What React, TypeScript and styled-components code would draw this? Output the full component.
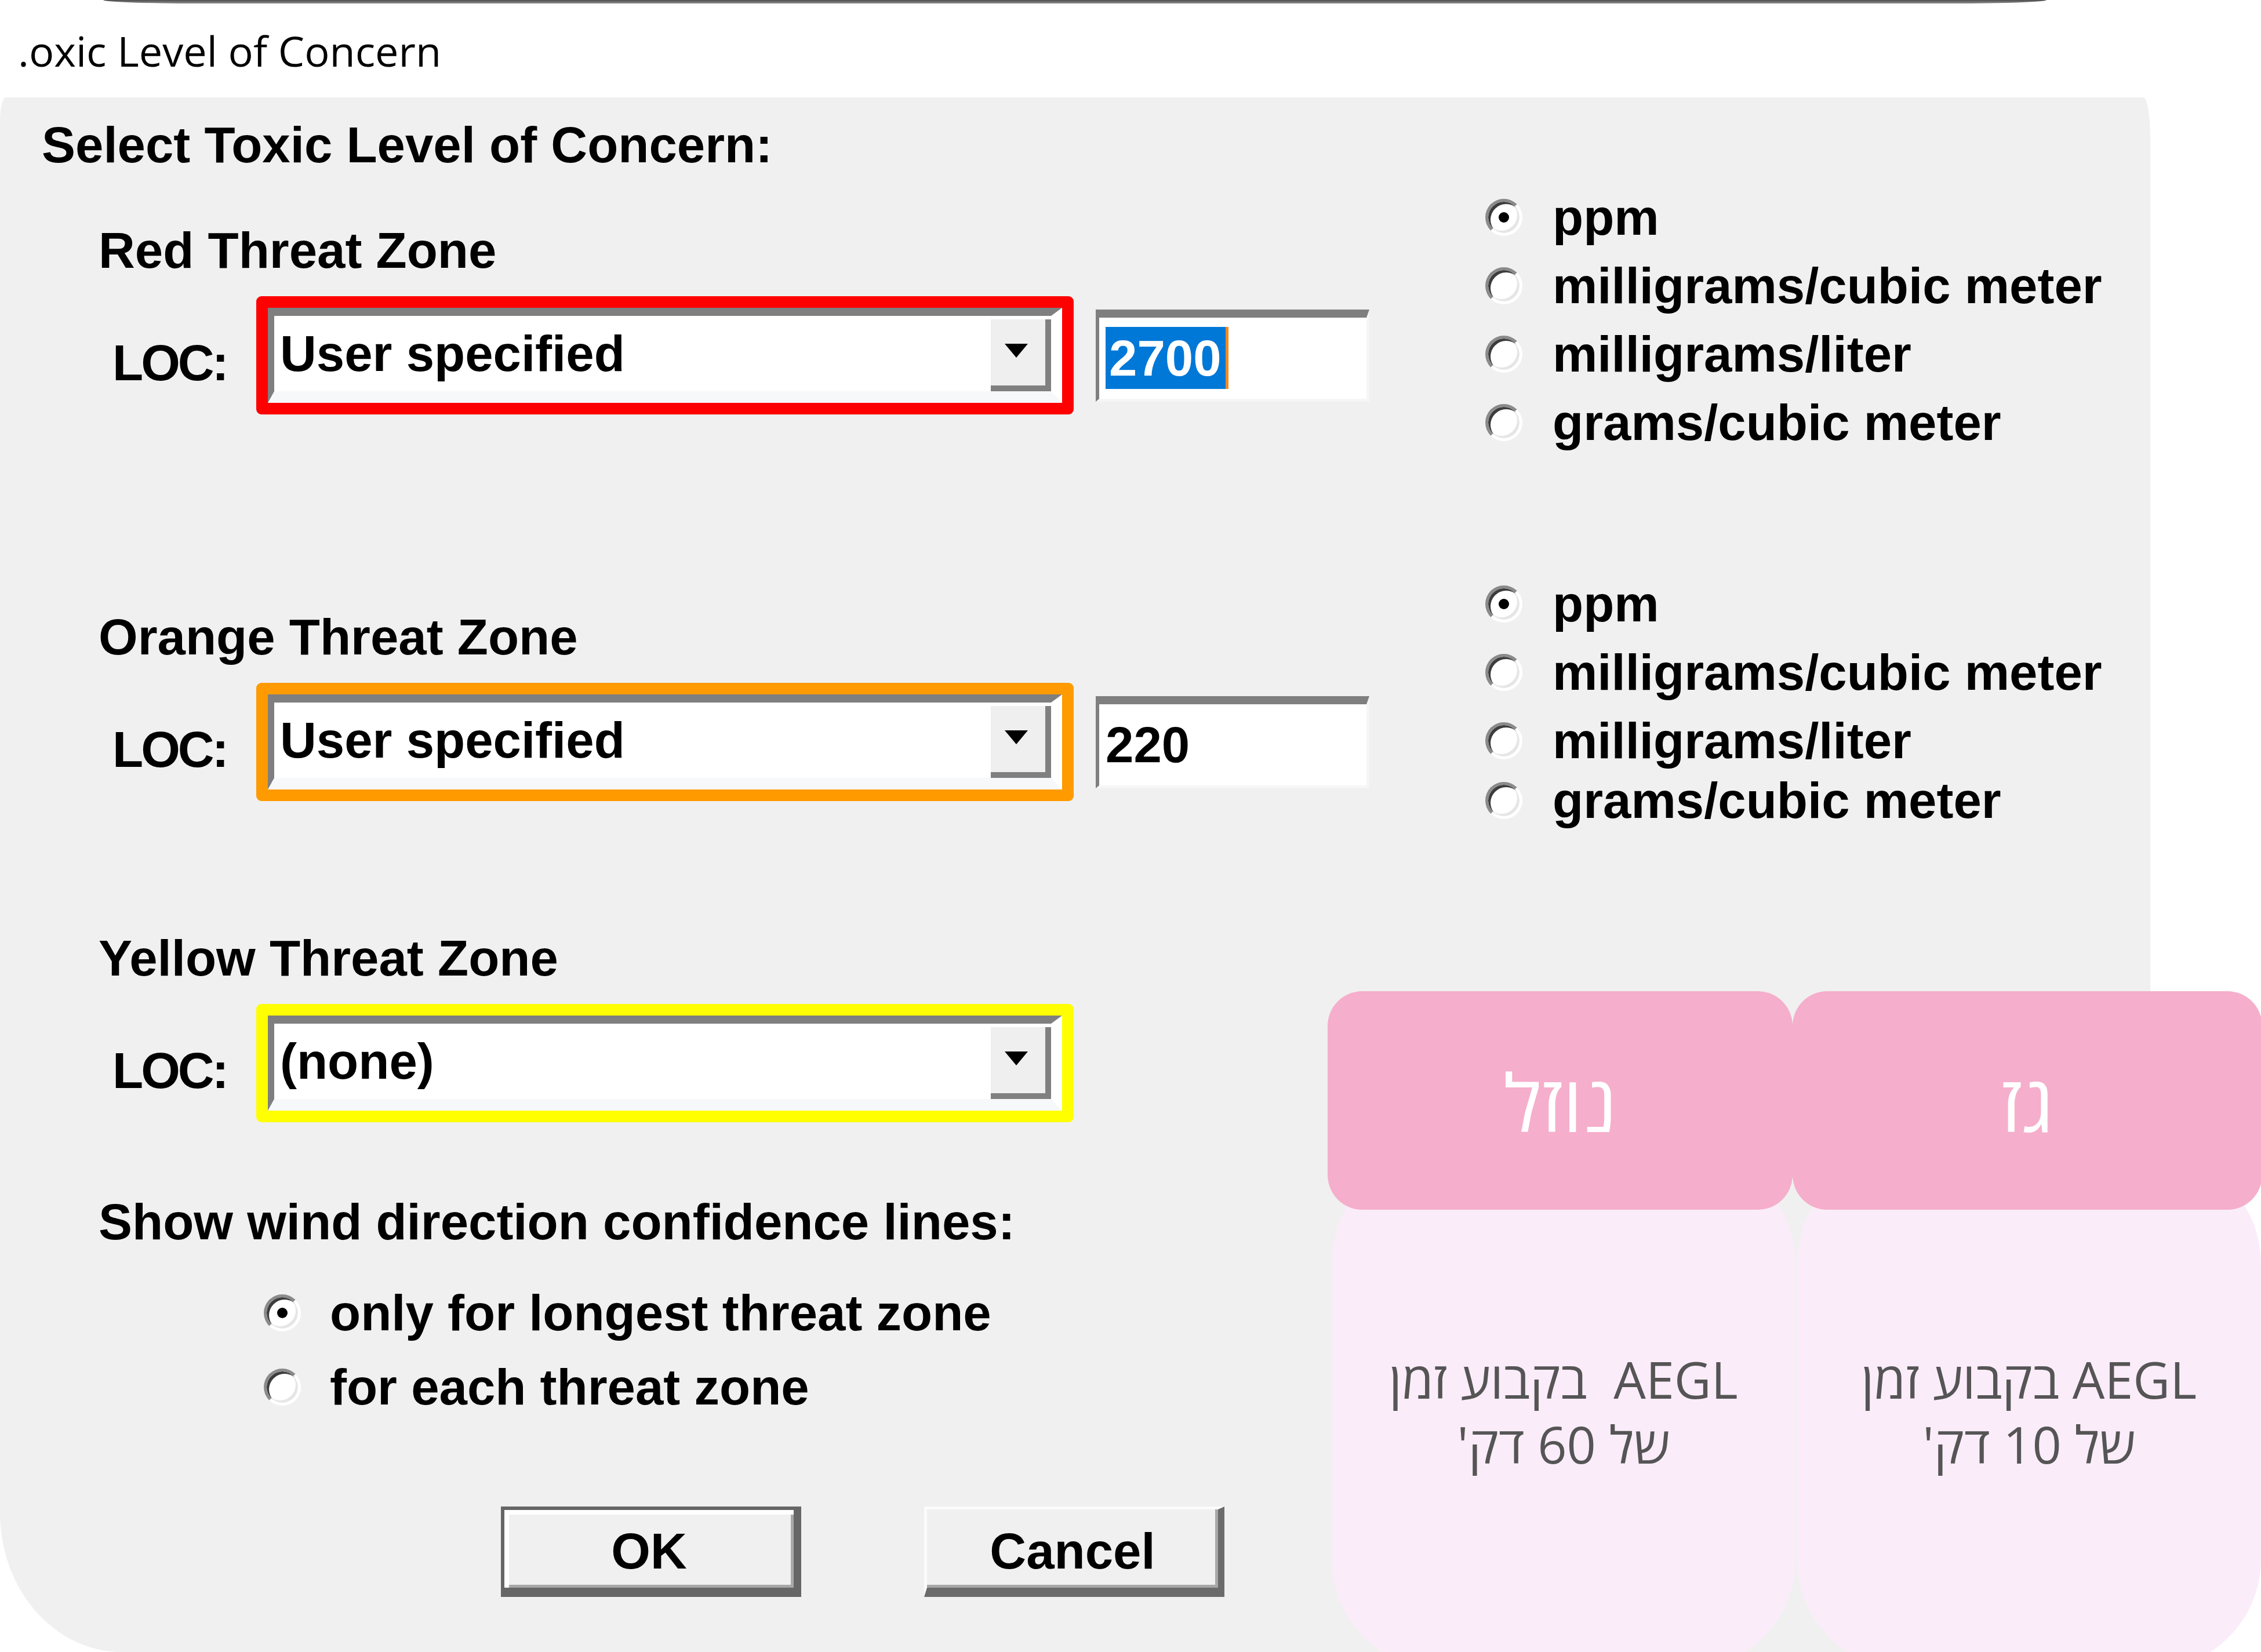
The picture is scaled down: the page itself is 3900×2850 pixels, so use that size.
import React from "react";
import styled, { createGlobalStyle } from "styled-components";

const GlobalStyle = createGlobalStyle`
  html, body {
    margin: 0;
    padding: 0;
    background: #ffffff;
  }
  body {
    width: 3900px;
    height: 2850px;
    overflow: hidden;
  }
  #root {
    width: 3900px;
    height: 2850px;
  }
`;

const Page = styled.div`
  position: relative;
  width: 3900px;
  height: 2850px;
  overflow: hidden;
  background: #ffffff;
  display: flex;
  flex-direction: column;
`;

const WindowEdge = styled.div`
  flex: none;
  margin-left: 178px;
  width: 3352px;
  height: 6px;
  background: linear-gradient(to bottom, #4e4e4e, #8e8e8e);
  border-radius: 0 0 160px 160px / 0 0 6px 6px;
`;

const TitleBar = styled.div`
  flex: none;
  height: 162px;
  display: flex;
  align-items: center;
  padding-left: 31px;
  font-family: "Open Sans", "Noto Sans", sans-serif;
  font-size: 72px;
  font-weight: 400;
  color: #000000;
`;

const Dialog = styled.div`
  flex: 1;
  width: 3709px;
  box-sizing: border-box;
  background: #f0f0f0;
  border-radius: 10px 12px 0 210px / 40px 70px 0 240px;
  padding: 32px 0 0 72px;
  font-family: "Liberation Sans", Arial, sans-serif;
  font-weight: 700;
  font-size: 87px;
  line-height: 100px;
  color: #000000;
`;

const Heading = styled.div`
  height: 100px;
  white-space: nowrap;
`;

const ZoneBlock = styled.div<{ $top: number }>`
  display: flex;
  align-items: flex-start;
  margin-left: 98px;
  margin-top: ${(p) => p.$top}px;
`;

const ZoneMain = styled.div`
  width: 2392px;
  flex: none;
  padding-top: 66px;
  display: flex;
  flex-direction: column;
`;

const ZoneTitle = styled.div`
  height: 100px;
  white-space: nowrap;
`;

const LocRow = styled.div`
  display: flex;
  align-items: center;
  margin-top: 29px;
  margin-left: 24px;
`;

const LocLabel = styled.div`
  width: 248px;
  flex: none;
  padding-top: 26px;
  letter-spacing: -4px;
`;

const ColorFrame = styled.div<{ $color: string }>`
  width: 1410px;
  height: 204px;
  box-sizing: border-box;
  flex: none;
  border: 20px solid ${(p) => p.$color};
  border-radius: 9px;
  display: flex;
`;

const Combo = styled.div`
  flex: 1;
  display: flex;
  border-style: solid;
  border-width: 14px 19px 20px 11px;
  border-color: #7f7f7f #ffffff #f7f8fa #7f7f7f;
  background: #ffffff;
`;

const ComboText = styled.div`
  flex: 1;
  display: flex;
  align-items: center;
  padding-left: 10px;
  white-space: nowrap;
`;

const DropButton = styled.div`
  width: 110px;
  flex: none;
  background: #efefef;
  box-shadow: inset 6px 6px 0 #ffffff, inset -10px -10px 0 #808080;
  display: flex;
  align-items: center;
  justify-content: center;
  padding: 0 10px 10px 0;
  box-sizing: border-box;
`;

const ValueInput = styled.div`
  width: 472px;
  height: 159px;
  box-sizing: border-box;
  flex: none;
  margin-left: 38px;
  border-style: solid;
  border-width: 14px 5px 5px 6px;
  border-color: #7f7f7f #f6f6f6 #f6f6f6 #7f7f7f;
  background: #ffffff;
  display: flex;
  align-items: center;
  padding-left: 11px;
`;

const Selection = styled.span`
  display: inline-block;
  background: #0078d7;
  color: #ffffff;
  line-height: 107px;
  padding: 0 7px 0 6px;
  border-right: 5px solid #f08a24;
`;

const UnitsGroup = styled.div`
  display: flex;
  flex-direction: column;
`;

const RadioRow = styled.div<{ $h: number; $gap: number; $pull?: number }>`
  display: flex;
  align-items: center;
  height: ${(p) => p.$h}px;
  gap: ${(p) => p.$gap}px;
  margin-top: ${(p) => -(p.$pull ?? 0)}px;
  white-space: nowrap;
`;

const RadioCircle = styled.span<{ $checked?: boolean }>`
  position: relative;
  flex: none;
  width: 64px;
  height: 64px;
  box-sizing: border-box;
  border-radius: 50%;
  border: 5px solid;
  border-color: #8a8a8a #ffffff #ffffff #8a8a8a;
  background: #ffffff;
  box-shadow: inset 4px 4px 0 #3c3c3c, inset -4px -4px 0 #e6e6e6;
  &::after {
    content: "";
    display: ${(p) => (p.$checked ? "block" : "none")};
    position: absolute;
    left: 50%;
    top: 50%;
    width: 18px;
    height: 18px;
    margin: -9px 0 0 -9px;
    border-radius: 50%;
    background: #000000;
  }
`;

const WindTitle = styled.div`
  margin: 122px 0 0 98px;
  height: 100px;
  white-space: nowrap;
`;

const WindOptions = styled.div`
  margin: 43px 0 0 383px;
  display: flex;
  flex-direction: column;
`;

const ButtonRow = styled.div`
  display: flex;
  gap: 212px;
  margin: 142px 0 0 792px;
`;

const DialogButton = styled.div<{ $default?: boolean }>`
  width: 518px;
  height: 156px;
  box-sizing: border-box;
  display: flex;
  align-items: center;
  justify-content: center;
  background: #f0f0f0;
  border-style: solid;
  border-width: ${(p) => (p.$default ? "6px 13px 16px 6px" : "5px 11px 16px 5px")};
  border-color: ${(p) =>
    p.$default ? "#666666" : "#fbfbfb #6b6b6b #6b6b6b #fbfbfb"};
  box-shadow: ${(p) =>
    p.$default
      ? "inset 8px 8px 0 #ffffff, inset -5px -5px 0 #a8a8a8"
      : "inset -5px -5px 0 #a8a8a8"};
  padding-top: 8px;
`;

const CardsOverlay = styled.div`
  position: absolute;
  left: 2290px;
  top: 1710px;
  display: grid;
  grid-template-columns: 802px 810px;
  font-family: "Open Sans", "DejaVu Sans", "Liberation Sans", sans-serif;
`;

const CardColumn = styled.div`
  display: flex;
  flex-direction: column;
`;

const CardHeader = styled.div`
  position: relative;
  z-index: 2;
  height: 377px;
  border-radius: 60px;
  background: #f5aecb;
  color: #ffffff;
  display: flex;
  align-items: center;
  justify-content: center;
  font-size: 136px;
  font-weight: 500;
  direction: rtl;
  padding-top: 4px;
  box-sizing: border-box;
`;

const CardBody = styled.div<{ $shift: number }>`
  position: relative;
  z-index: 1;
  margin-top: -97px;
  margin-left: ${(p) => p.$shift}px;
  width: 800px;
  height: 890px;
  border-radius: 190px;
  background: #fbecfa;
  display: flex;
  flex-direction: column;
  align-items: center;
  justify-content: center;
  color: #555555;
  font-size: 88px;
  font-weight: 500;
  line-height: 112px;
  direction: rtl;
  text-align: center;
`;

const BodyLine = styled.div`
  white-space: pre;
`;

function Arrow() {
  return (
    <svg width="40" height="24" viewBox="0 0 40 24">
      <polygon points="0,0 40,0 20,24" fill="#000000" />
    </svg>
  );
}

type Zone = {
  title: string;
  color: string;
  value?: string;
  selected?: boolean;
  combo: string;
  top: number;
  units: boolean;
  lastPull: number;
};

const zones: Zone[] = [
  { title: "Red Threat Zone", color: "#ff0000", value: "2700", selected: true, combo: "User specified", top: 16, units: true, lastPull: 0 },
  { title: "Orange Threat Zone", color: "#ff9a00", value: "220", combo: "User specified", top: 195, units: true, lastPull: 15 },
  { title: "Yellow Threat Zone", color: "#ffff00", combo: "(none)", top: 97, units: false, lastPull: 0 },
];

const unitLabels = ["ppm", "milligrams/cubic meter", "milligrams/liter", "grams/cubic meter"];

export default function App() {
  return (
    <>
      <GlobalStyle />
      <Page>
        <WindowEdge />
        <TitleBar>.oxic Level of Concern</TitleBar>
        <Dialog>
          <Heading>Select Toxic Level of Concern:</Heading>
          {zones.map((z) => (
            <ZoneBlock key={z.title} $top={z.top}>
              <ZoneMain>
                <ZoneTitle>{z.title}</ZoneTitle>
                <LocRow>
                  <LocLabel>LOC:</LocLabel>
                  <ColorFrame $color={z.color}>
                    <Combo>
                      <ComboText>{z.combo}</ComboText>
                      <DropButton>
                        <Arrow />
                      </DropButton>
                    </Combo>
                  </ColorFrame>
                  {z.value !== undefined && (
                    <ValueInput>
                      {z.selected ? <Selection>{z.value}</Selection> : z.value}
                    </ValueInput>
                  )}
                </LocRow>
              </ZoneMain>
              {z.units && (
                <UnitsGroup>
                  {unitLabels.map((u, i) => (
                    <RadioRow
                      key={u}
                      $h={118}
                      $gap={52}
                      $pull={i === unitLabels.length - 1 ? z.lastPull : 0}
                    >
                      <RadioCircle $checked={i === 0} />
                      {u}
                    </RadioRow>
                  ))}
                </UnitsGroup>
              )}
            </ZoneBlock>
          ))}
          <WindTitle>Show wind direction confidence lines:</WindTitle>
          <WindOptions>
            <RadioRow $h={128} $gap={50}>
              <RadioCircle $checked />
              only for longest threat zone
            </RadioRow>
            <RadioRow $h={128} $gap={50}>
              <RadioCircle />
              for each threat zone
            </RadioRow>
          </WindOptions>
          <ButtonRow>
            <DialogButton $default>OK</DialogButton>
            <DialogButton>Cancel</DialogButton>
          </ButtonRow>
        </Dialog>
        <CardsOverlay>
          <CardColumn>
            <CardHeader>נוזל</CardHeader>
            <CardBody $shift={7}>
              <BodyLine>{"AEGL  בקבוע זמן"}</BodyLine>
              <BodyLine>{"של 60 דק'"}</BodyLine>
            </CardBody>
          </CardColumn>
          <CardColumn>
            <CardHeader>גז</CardHeader>
            <CardBody $shift={8}>
              <BodyLine>{"AEGL בקבוע זמן"}</BodyLine>
              <BodyLine>{"של 10 דק'"}</BodyLine>
            </CardBody>
          </CardColumn>
        </CardsOverlay>
      </Page>
    </>
  );
}
